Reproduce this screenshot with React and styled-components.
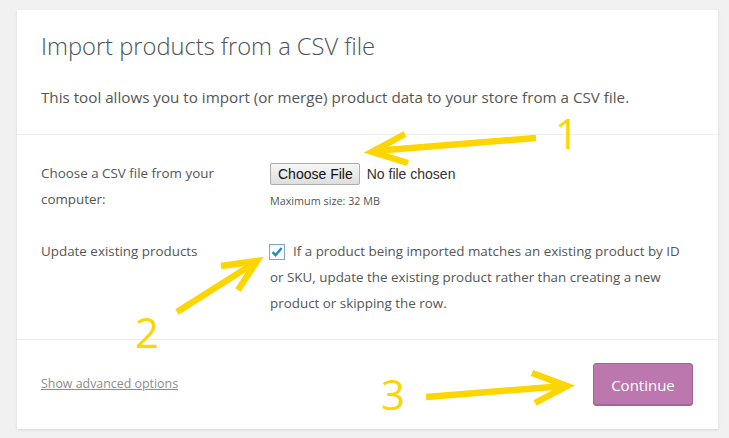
import React from 'react';
import styled, { createGlobalStyle } from 'styled-components';

const GlobalStyle = createGlobalStyle`
  html, body {
    margin: 0;
    padding: 0;
    background: #f1f1f1;
  }
  body {
    font-family: "Open Sans", "Noto Sans", sans-serif;
    color: #444;
  }
`;

const Page = styled.div`
  position: relative;
  width: 729px;
  height: 438px;
  padding: 10px 0 0 17px;
  box-sizing: border-box;
  overflow: hidden;
`;

const Card = styled.div`
  width: 701px;
  height: 419px;
  background: #fff;
  box-shadow: 0 1px 3px rgba(0, 0, 0, 0.1);
  display: flex;
  flex-direction: column;
`;

const Header = styled.header`
  padding: 21px 24px 27px;
  border-bottom: 1px solid #eee;
`;

const Title = styled.h2`
  margin: 0 0 26px;
  font-size: 23.7px;
  line-height: 30px;
  font-weight: 300;
  color: #4b5157;
`;

const Lead = styled.p`
  margin: 0;
  font-size: 15.2px;
  line-height: 20px;
  color: #555;
`;

const Body = styled.section`
  display: grid;
  grid-template-columns: 229px 416px;
  row-gap: 24px;
  padding: 25px 24px 23px;
  border-bottom: 1px solid #eee;
  font-size: 13.4px;
  line-height: 26px;
  color: #555;
`;

const Label = styled.div`
  width: 185px;
`;

const Field = styled.div``;

const FileRow = styled.div`
  display: flex;
  align-items: center;
  gap: 7px;
  height: 26px;
  margin-top: 1px;
`;

const FileButton = styled.span`
  display: inline-flex;
  align-items: center;
  height: 22px;
  padding: 0 6px 0 7px;
  box-sizing: border-box;
  border: 1px solid #adadad;
  border-radius: 2px;
  background: linear-gradient(#f6f6f6, #dedede);
  font-family: "Liberation Sans", Arial, sans-serif;
  font-size: 14px;
  color: #111;
`;

const FileName = styled.span`
  font-family: "Liberation Sans", Arial, sans-serif;
  font-size: 14px;
  color: #333;
`;

const Hint = styled.p`
  margin: 1px 0 0;
  font-size: 10.8px;
  line-height: 26px;
  color: #555;
`;

const Check = styled.span`
  display: inline-flex;
  align-items: center;
  justify-content: center;
  width: 16px;
  height: 16px;
  box-sizing: border-box;
  margin: 0 8px 0 -1px;
  vertical-align: -3px;
  border: 1px solid #7ea6cf;
  background: #fff;
  box-shadow: inset 0 1px 2px rgba(0, 0, 0, 0.08);
`;

const Footer = styled.footer`
  flex: 1;
  display: flex;
  align-items: center;
  justify-content: space-between;
  padding: 0 25px 0 24px;
`;

const AdvancedLink = styled.a`
  font-size: 12.4px;
  color: #8c8c8c;
  text-decoration: underline;
  margin-top: -2px;
`;

const ContinueButton = styled.button`
  width: 100px;
  height: 43px;
  border: 1px solid #a36597;
  border-radius: 3px;
  background: #bb77ae;
  box-shadow: inset 0 -1px 0 #a36597;
  color: #fff;
  font-family: "Open Sans", sans-serif;
  font-size: 15px;
`;

const Overlay = styled.div`
  position: absolute;
  inset: 0;
  pointer-events: none;
`;

const Number = styled.span`
  position: absolute;
  font-family: "Open Sans", sans-serif;
  font-weight: 400;
  font-size: 42px;
  line-height: 1;
  color: #fdd500;
`;

const arrows = [
  { line: [536, 138, 374, 151], head: [[405, 134], [372, 152], [408, 163]] },
  { line: [177, 312, 256, 262], head: [[221, 266], [257, 261], [238, 290]] },
  { line: [426, 397, 565, 386], head: [[532, 373], [567, 386], [535, 403]] },
];

const numbers = [
  { n: '1', x: 555, y: 112 },
  { n: '2', x: 135, y: 311 },
  { n: '3', x: 381, y: 373 },
];

export default function App() {
  return (
    <>
      <GlobalStyle />
      <Page>
        <Card>
          <Header>
            <Title>Import products from a CSV file</Title>
            <Lead>This tool allows you to import (or merge) product data to your store from a CSV file.</Lead>
          </Header>
          <Body>
            <Label>Choose a CSV file from your computer:</Label>
            <Field>
              <FileRow>
                <FileButton>Choose File</FileButton>
                <FileName>No file chosen</FileName>
              </FileRow>
              <Hint>Maximum size: 32 MB</Hint>
            </Field>
            <Label>Update existing products</Label>
            <Field>
              <Check>
                <svg width="14" height="14" viewBox="0 0 14 14">
                  <path d="M2.5 7.2 L5.6 10.2 L11.6 3" fill="none" stroke="#1e8cbe" strokeWidth="2.4" />
                </svg>
              </Check>
              If a product being imported matches an existing product by ID or SKU, update the existing product rather than creating a new product or skipping the row.
            </Field>
          </Body>
          <Footer>
            <AdvancedLink href="#">Show advanced options</AdvancedLink>
            <ContinueButton>Continue</ContinueButton>
          </Footer>
        </Card>
        <Overlay>
          <svg width="729" height="438" viewBox="0 0 729 438">
            {arrows.map((a, i) => (
              <g key={i} stroke="#fdd500" strokeWidth="6.5" fill="none" strokeLinejoin="miter">
                <line x1={a.line[0]} y1={a.line[1]} x2={a.line[2]} y2={a.line[3]} />
                <polyline points={a.head.map(p => p.join(',')).join(' ')} />
              </g>
            ))}
          </svg>
          {numbers.map(d => (
            <Number key={d.n} style={{ left: d.x, top: d.y }}>{d.n}</Number>
          ))}
        </Overlay>
      </Page>
    </>
  );
}
